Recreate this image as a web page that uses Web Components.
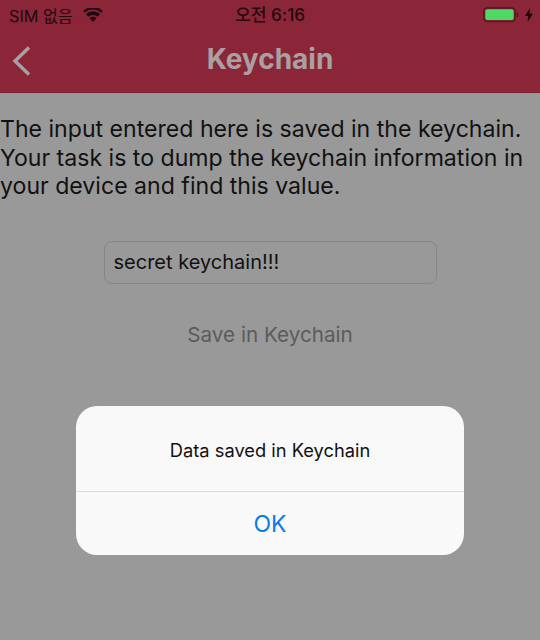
<!DOCTYPE html>
<html lang="ko"><head><meta charset="utf-8"><style>
html,body{margin:0;padding:0;background:#999}
body{font-family:Inter,"Noto Sans CJK KR",sans-serif;width:540px;height:640px;overflow:hidden;position:relative}
</style></head><body>
<app-screen>
<status-bar></status-bar>
<nav-bar>Keychain</nav-bar>
<key-content></key-content>
</app-screen>
<alert-box message="Data saved in Keychain" action="OK"></alert-box>
<script>
function def(name,html){customElements.define(name,class extends HTMLElement{constructor(){super();const s=this.attachShadow({mode:'open'});s.innerHTML=typeof html==='function'?html(this):html;}})}
def('app-screen',`<style>:host{display:flex;flex-direction:column;width:540px;height:640px;background:#999}</style><slot></slot>`);
def('status-bar',`<style>
:host{display:flex;align-items:center;justify-content:space-between;height:30px;padding:0 7px 0 9px;background:#8b2639;color:#1f0810;font:16.200px Inter,"Noto Sans CJK KR",sans-serif;position:relative}
.l,.r{display:flex;align-items:center}
.l{gap:10px}
.t{position:absolute;left:0;right:0;text-align:center;font-weight:500;font-size:17.200px;line-height:30px}
.r{gap:6px}
</style>
<div class="l"><span>SIM 없음</span><svg width="20" height="14" viewBox="0 0 21 15"><path d="M10.5 15 6.800 10.900a5.400 5.400 0 0 1 7.400 0ZM5.400 9.300 2.900 6.500a11.300 11.300 0 0 1 15.200 0L15.600 9.300a7.700 7.700 0 0 0-10.200 0ZM1.700 5.100 0 3a15.700 15.700 0 0 1 21 0L19.300 5.100a13.200 13.200 0 0 0-17.600 0Z" fill="#1f0810"/></svg></div>
<div class="t">오전 6:16</div>
<div class="r"><svg width="36" height="16" viewBox="0 0 36 16"><rect x=".9" y=".9" width="31.200" height="13.600" rx="3.500" fill="none" stroke="#5e1423" stroke-width="1.600"/><rect x="2.300" y="2.300" width="28.400" height="10.800" rx="2" fill="#4cd964"/><path d="M33.500 5.500h1.200a1 1 0 0 1 .8 1v2.400a1 1 0 0 1-.8 1h-1.200Z" fill="#5e1423"/></svg><svg width="8" height="14" viewBox="0 0 8 14"><path d="M5 0 0 8h3.200L2.600 14 8 5.600H4.600Z" fill="#1f0810"/></svg></div>`);
def('nav-bar',`<style>
:host{display:flex;align-items:center;justify-content:center;height:63px;background:#8b2639;border-bottom:1px solid #7d2233;box-sizing:border-box;color:#a9a0a3;font:700 28px Inter,sans-serif;position:relative;padding-bottom:4px}
svg{position:absolute;left:11px;top:15px}
</style><svg width="20" height="32" viewBox="0 0 20 32"><path d="M18 2.500 4 16 18 29.500" fill="none" stroke="#a9a0a3" stroke-width="3.400"/></svg><slot></slot>`);
def('key-content',`<style>
:host{display:flex;flex-direction:column;align-items:center;color:#111;font:23.100px/28.500px Inter,sans-serif}
p{margin:22px 0 0;align-self:flex-start;width:540px;white-space:nowrap}
.f{box-sizing:border-box;width:333px;height:43px;margin-top:40.500px;border:1px solid #868686;border-radius:8px;padding:0 9px;display:flex;align-items:center;font-size:20px;color:#111}
.b{margin-top:37px;font-size:20.700px;color:#5c5c5c}
</style><p>The input entered here is saved in the keychain.<br>Your task is to dump the keychain information in<br>your device and find this value.</p><div class="f">secret keychain!!!</div><div class="b">Save in Keychain</div>`);
def('alert-box',el=>`<style>
:host{position:absolute;left:76px;top:406px;width:388px;height:149px;background:#f9f9f9;border-radius:21px;display:flex;flex-direction:column;font-family:Inter,sans-serif}
.m{height:85px;display:flex;align-items:center;justify-content:center;font-size:18.300px;color:#111;border-bottom:1px solid #dcdcde}
.m span{position:relative;top:1px}
.a{flex:1;display:flex;align-items:center;justify-content:center;font-size:23px;color:#0a7ae8}
</style><div class="m"><span>${el.getAttribute('message')}</span></div><div class="a">${el.getAttribute('action')}</div>`);
</script></body></html>
